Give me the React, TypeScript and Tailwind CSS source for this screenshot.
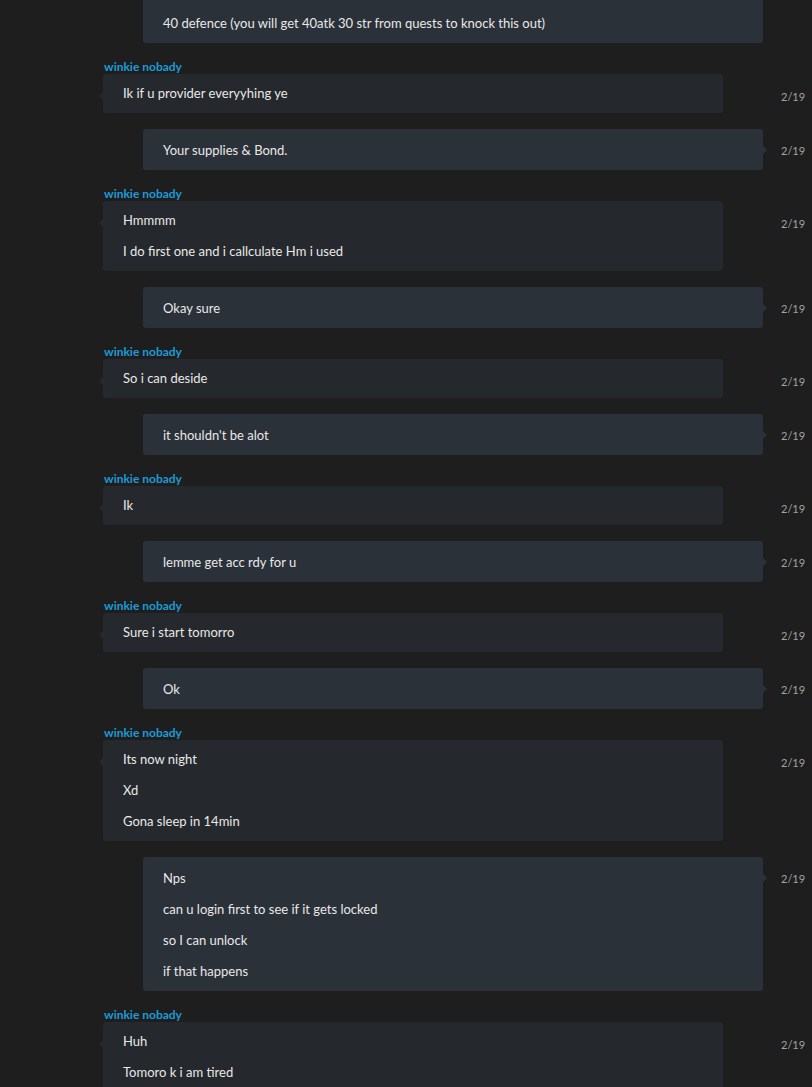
import React from "react";

type Msg = { me: boolean; lines: string[] };

const msgs: Msg[] = [
  { me: false, lines: ["Ik if u provider everyyhing ye"] },
  { me: true, lines: ["Your supplies & Bond."] },
  { me: false, lines: ["Hmmmm", "I do first one and i callculate Hm i used"] },
  { me: true, lines: ["Okay sure"] },
  { me: false, lines: ["So i can deside"] },
  { me: true, lines: ["it shouldn't be alot"] },
  { me: false, lines: ["Ik"] },
  { me: true, lines: ["lemme get acc rdy for u"] },
  { me: false, lines: ["Sure i start tomorro"] },
  { me: true, lines: ["Ok"] },
  { me: false, lines: ["Its now night", "Xd", "Gona sleep in 14min"] },
  { me: true, lines: ["Nps", "can u login first to see if it gets locked", "so I can unlock", "if that happens"] },
  { me: false, lines: ["Huh", "Tomoro k i am tired"] },
];

function Row({ m }: { m: Msg }) {
  if (m.me) {
    return (
      <div className="flex mt-4">
        <div className="w-[763px] flex justify-end">
          <div className="relative w-[620px] bg-[#2b3139] rounded-[3px] pt-[11px] pb-[10px] px-5 flex flex-col gap-[11px]">
            {m.lines.map((l, i) => (
              <div key={i} className="leading-[20px] h-[20px]">{l}</div>
            ))}
            <div className="absolute right-[-4px] top-[17px] w-0 h-0 border-y-[4px] border-y-transparent border-l-[4px] border-l-[#2b3139]" />
          </div>
        </div>
        <div className="ml-[18px] pt-[14px] text-[11px] leading-[16px] text-[#a3a3a3]">2/19</div>
      </div>
    );
  }
  return (
    <div className="flex flex-col mt-[15px]">
      <div className="pl-[104px] h-[16px] pt-[1px] text-[12px] leading-[15px] font-bold text-[#1b9bd7]">winkie nobady</div>
      <div className="flex">
        <div className="w-[763px] pl-[103px]">
          <div className="relative w-[620px] bg-[#25282c] rounded-[3px] pt-[9px] pb-[10px] px-5 flex flex-col gap-[11px]">
            {m.lines.map((l, i) => (
              <div key={i} className="leading-[20px] h-[20px]">{l}</div>
            ))}
            <div className="absolute left-[-4px] top-[18px] w-0 h-0 border-y-[4px] border-y-transparent border-r-[4px] border-r-[#25282c]" />
          </div>
        </div>
        <div className="ml-[18px] pt-[15px] text-[11px] leading-[16px] text-[#a3a3a3]">2/19</div>
      </div>
    </div>
  );
}

export default function App() {
  return (
    <div
      className="w-[812px] h-[1087px] overflow-hidden bg-[#1e1e1e] text-[#e8e8e8] text-[13px]"
      style={{ fontFamily: 'Lato, "Noto Sans", sans-serif' }}
    >
      <div className="flex">
        <div className="w-[763px] flex justify-end">
          <div className="w-[620px] h-[43px] bg-[#2b3139] rounded-b-[3px] pt-[13px] px-5 leading-[20px]">
            40 defence (you will get 40atk 30 str from quests to knock this out)
          </div>
        </div>
      </div>
      {msgs.map((m, i) => (
        <Row key={i} m={m} />
      ))}
    </div>
  );
}
